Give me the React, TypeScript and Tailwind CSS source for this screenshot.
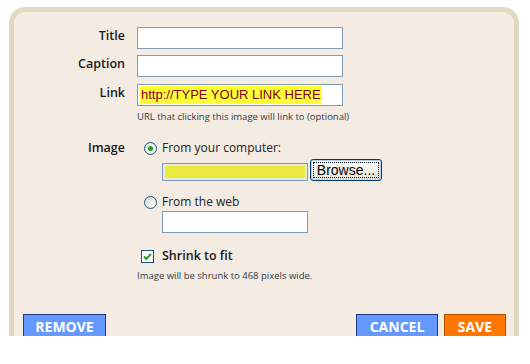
import React from "react";

const font = "font-['Open_Sans',_'DejaVu_Sans',_sans-serif]";

const Radio = ({ checked }: { checked?: boolean }) => (
  <span className="w-[13px] h-[13px] rounded-full border border-[#1c5180] bg-gradient-to-br from-[#dcdcd6] to-white flex items-center justify-center shrink-0">
    {checked && <span className="w-[5px] h-[5px] rounded-full bg-[#21a121]" />}
  </span>
);

const TextBox = ({ w = "w-[206px]" }: { w?: string }) => (
  <div className={`${w} h-[22px] bg-white border border-[#7f9db9]`} />
);

const Row = ({ label, children }: { label: string; children: React.ReactNode }) => (
  <div className="flex items-start">
    <div className="w-[111px] text-right text-[12.5px] font-semibold text-[#1a1a1a] leading-[18px]">
      {label}
    </div>
    <div className="ml-[12px]">{children}</div>
  </div>
);

export default function App() {
  return (
    <div className={`w-[530px] h-[364px] bg-white overflow-hidden ${font}`}>
      <div className="h-[336px] overflow-hidden pt-[7px] pl-[9px]">
        <div className="w-[510px] h-[400px] border-[5px] border-b-0 border-[#e2d7c3] rounded-t-[16px] bg-[#f4ece3] pt-[15px]">
          <div className="flex flex-col">
            <Row label="Title">
              <TextBox />
            </Row>
            <div className="mt-[6px]">
              <Row label="Caption">
                <TextBox />
              </Row>
            </div>
            <div className="mt-[7px]">
              <Row label="Link">
                <div className="w-[206px] h-[22px] bg-white border border-[#7f9db9] pl-[2px] pt-[1px] flex items-start">
                  <span className="bg-[#ffff33] text-[#80002a] font-['Liberation_Sans',_Arial,_sans-serif] text-[13px] leading-[18px] px-[1px]">
                    http://TYPE YOUR LINK HERE
                  </span>
                </div>
                <div className="mt-[4px] text-[9.5px] leading-[13px] text-[#333844]">
                  URL that clicking this image will link to (optional)
                </div>
              </Row>
            </div>
            <div className="mt-[16px]">
              <Row label="Image">
                <div className="pt-[1px]">
                  <div className="flex items-center ml-[7px] h-[16px]">
                    <Radio checked />
                    <span className="ml-[5px] text-[12px] text-[#222]">From your computer:</span>
                  </div>
                  <div className="flex items-center ml-[25px] mt-[3px]">
                    <div className="w-[146px] h-[18px] bg-[#ebe8dc] border border-[#7f9db9] p-[2px] mt-[4px]">
                      <div className="w-full h-full bg-[#ebea3f]" />
                    </div>
                    <div className="ml-[2px] w-[72px] h-[22px] rounded-[3px] border border-[#003c74] bg-gradient-to-b from-white to-[#e6e3d6] p-[2px] shadow-[inset_0_0_0_1px_#b5cdf3]">
                      <div className="w-full h-full border border-dotted border-black flex items-center justify-center font-['Liberation_Sans',_Arial,_sans-serif] text-[14px] text-black leading-none">
                        Browse...
                      </div>
                    </div>
                  </div>
                  <div className="flex items-center ml-[7px] mt-[13px] h-[16px]">
                    <Radio />
                    <span className="ml-[5px] text-[12px] text-[#222]">From the web</span>
                  </div>
                  <div className="ml-[25px] mt-[1px]">
                    <TextBox w="w-[146px]" />
                  </div>
                </div>
              </Row>
            </div>
            <div className="flex items-center ml-[127px] mt-[15px] h-[16px]">
              <span className="w-[13px] h-[13px] border border-[#1c5180] bg-white flex items-center justify-center">
                <svg width="9" height="9" viewBox="0 0 9 9">
                  <path d="M1 4.5 L3.3 7 L8 1.8" fill="none" stroke="#21a121" strokeWidth="2" />
                </svg>
              </span>
              <span className="ml-[8px] text-[12.5px] font-semibold text-[#1a1a1a]">Shrink to fit</span>
            </div>
            <div className="ml-[123px] mt-[5px] text-[9.5px] leading-[13px] text-[#333844]">
              Image will be shrunk to 468 pixels wide.
            </div>
            <div className="flex items-start mt-[32px] px-[9px]">
              <button className="w-[83px] h-[25px] bg-[#6699ff] border border-[#1a3a8c] text-white font-bold text-[14px] leading-none">
                REMOVE
              </button>
              <div className="flex-1 flex justify-center pt-[21px]">
                <span className="text-[11px] leading-[14px] text-[#663399] underline">Add more images</span>
              </div>
              <button className="w-[82px] h-[25px] bg-[#6699ff] border border-[#1a3a8c] text-white font-bold text-[14px] leading-none">
                CANCEL
              </button>
              <button className="ml-[6px] mr-[-1px] w-[62px] h-[25px] bg-[#ff7700] border border-[#b34d00] text-white font-bold text-[14px] leading-none">
                SAVE
              </button>
            </div>
          </div>
        </div>
      </div>
    </div>
  );
}
